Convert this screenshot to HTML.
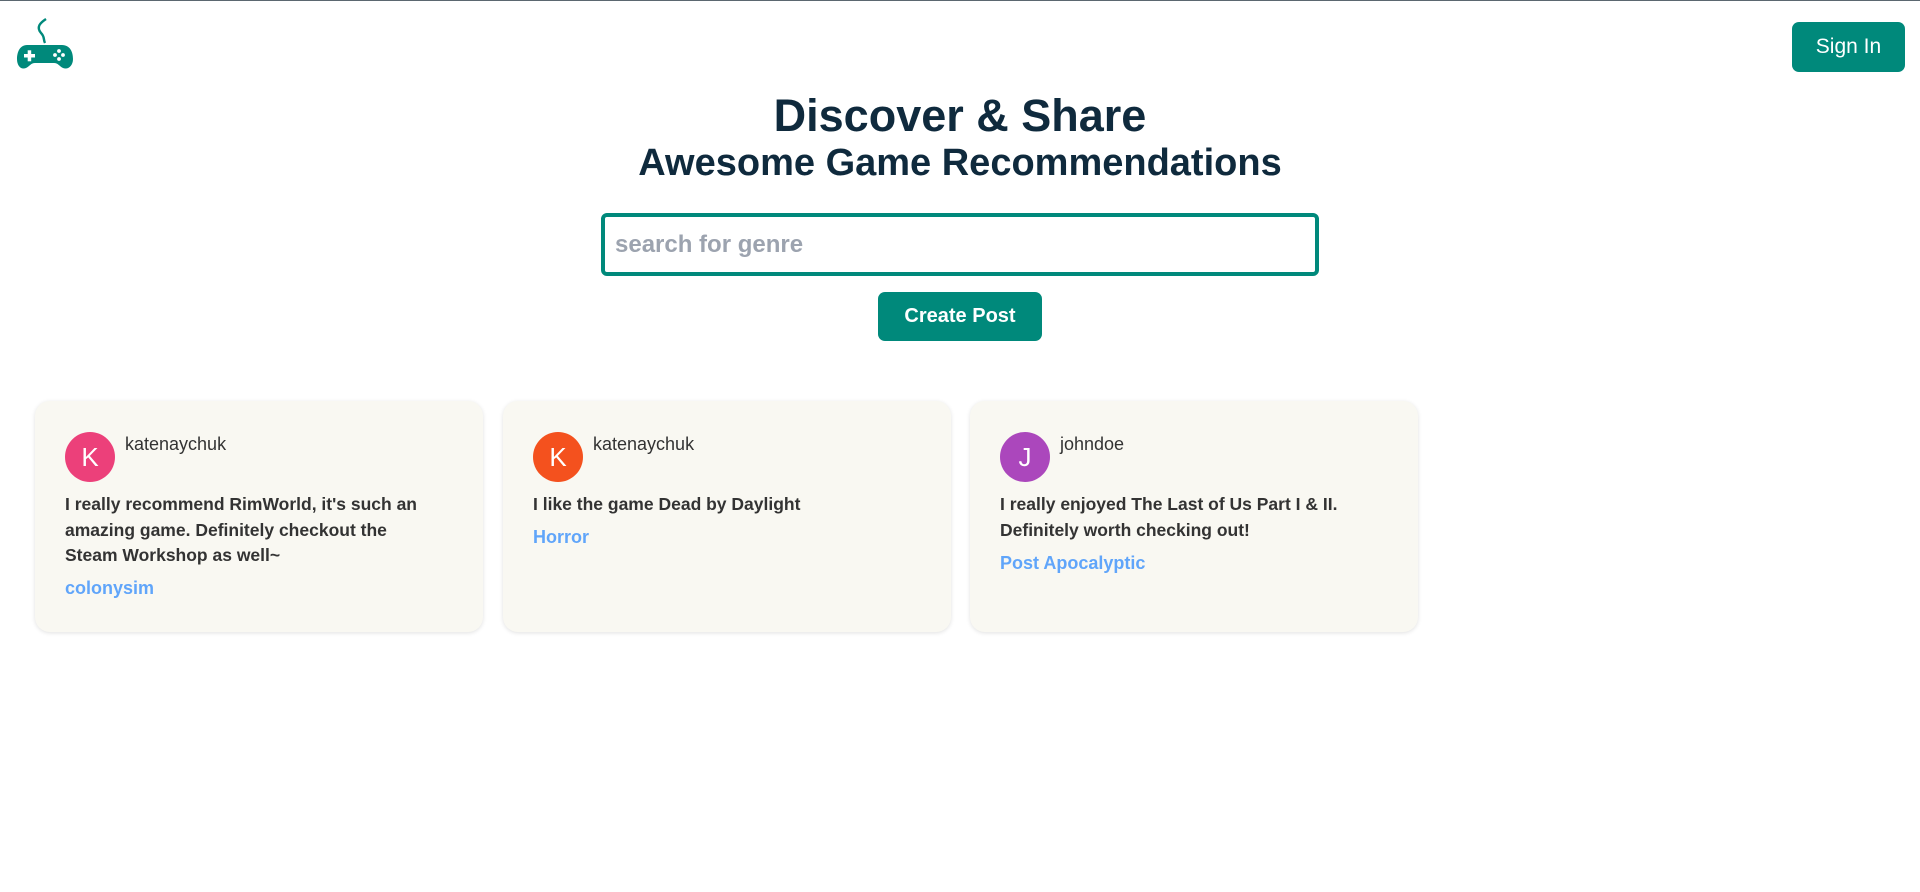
<!DOCTYPE html>
<html><head><meta charset="utf-8"><style>
*{box-sizing:border-box;margin:0;padding:0}
body{width:1920px;height:892px;background:#fff;font-family:"Liberation Sans",Arial,sans-serif;position:relative;overflow:hidden;border-top:1px solid #5b6770}
.abs{position:absolute}
.btn{background:#00897b;color:#fff;border-radius:7px;display:flex;align-items:center;justify-content:center}
h1{position:absolute;left:0;width:1920px;text-align:center;color:#0f2a3d;font-weight:bold}
.card{position:absolute;top:400px;width:448px;height:231px;background:#f9f8f2;border-radius:15px;box-shadow:0 1px 4px rgba(0,0,0,.12)}
.av{position:absolute;left:30px;top:31px;width:50px;height:50px;border-radius:50%;color:#fff;font-size:26px;display:flex;align-items:center;justify-content:center}
.un{position:absolute;left:90px;top:33px;font-size:18px;color:#333}
.tx{position:absolute;left:30px;top:91px;width:370px;font-size:17.5px;line-height:25.5px;font-weight:bold;color:#333}
.tg{position:absolute;left:30px;font-size:18px;font-weight:bold;color:#60a5fa}
</style></head><body>
<svg class="abs" style="left:16px;top:16px" width="58" height="56" viewBox="0 0 58 56">
<path d="M30 2 C24 6,20 10,25 16 C29 20,27 22,29 26" stroke="#00897b" stroke-width="2.4" fill="none"/>
<path d="M11 28 H46 C54 28,57 35,57 42 C57 49,52 53,47 51 C43 49,42 46,38 46 H19 C15 46,14 49,10 51 C5 53,1 49,1 42 C1 35,4 28,11 28Z" fill="#00897b"/>
<rect x="8" y="37" width="11" height="3.5" fill="#fff"/><rect x="11.7" y="33.3" width="3.5" height="11" fill="#fff"/>
<circle cx="43" cy="34" r="1.9" fill="#fff"/><circle cx="39" cy="38" r="1.9" fill="#fff"/><circle cx="47" cy="38" r="1.9" fill="#fff"/><circle cx="43" cy="42" r="1.9" fill="#fff"/>
</svg>
<div class="abs btn" style="left:1792px;top:21px;width:113px;height:50px;font-size:21px">Sign In</div>
<h1 style="top:89px;font-size:45px">Discover &amp; Share</h1>
<h1 style="top:141px;font-size:38px">Awesome Game Recommendations</h1>
<div class="abs" style="left:601px;top:212px;width:718px;height:63px;border:4px solid #00897b;border-radius:6px;padding-left:10px;display:flex;align-items:center;font-size:24px;font-weight:bold;color:#9ca3af">search for genre</div>
<div class="abs btn" style="left:878px;top:291px;width:164px;height:49px;font-size:20px;font-weight:bold">Create Post</div>
<div class="card" style="left:35px"><div class="av" style="background:#ec407a">K</div><div class="un">katenaychuk</div>
<div class="tx">I really recommend RimWorld, it's such an amazing game. Definitely checkout the Steam Workshop as well~</div><div class="tg" style="top:177px">colonysim</div></div>
<div class="card" style="left:503px"><div class="av" style="background:#f4511e">K</div><div class="un">katenaychuk</div>
<div class="tx">I like the game Dead by Daylight</div><div class="tg" style="top:126px">Horror</div></div>
<div class="card" style="left:970px"><div class="av" style="background:#ab47bc">J</div><div class="un">johndoe</div>
<div class="tx">I really enjoyed The Last of Us Part I &amp; II. Definitely worth checking out!</div><div class="tg" style="top:152px">Post Apocalyptic</div></div>
</body></html>
